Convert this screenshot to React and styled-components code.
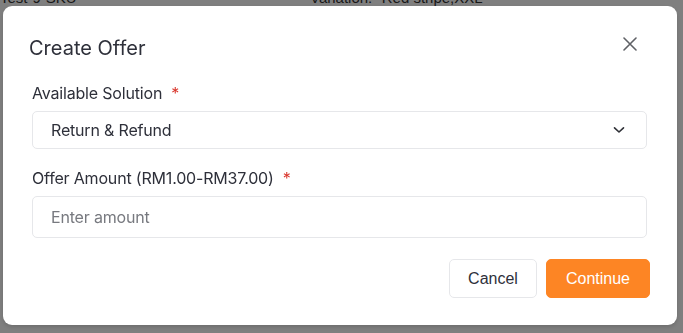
import styled, { createGlobalStyle } from "styled-components";

const GlobalStyle = createGlobalStyle`
    html, body {
        margin: 0;
        padding: 0;
        background: #ffffff;
        font-family: Inter, "Liberation Sans", Arial, sans-serif;
    }
    * {
        box-sizing: border-box;
    }
`

const ChevronDown = () => (
    <svg width="12" height="8" viewBox="0 0 12 8" fill="none">
        <path d="M1.5 1.8 L6 6 L10.5 1.8" stroke="#2f3137" strokeWidth="1.6" strokeLinecap="round" strokeLinejoin="round" />
    </svg>
)

const CloseIcon = () => (
    <svg width="14" height="14" viewBox="0 0 14 14" fill="none">
        <path d="M1 1 L13 13 M13 1 L1 13" stroke="#5f6166" strokeWidth="1.6" strokeLinecap="round" />
    </svg>
)

const App = () => {

    return (
        <>
            <GlobalStyle />
            <Page>
                <PageRow>
                    <PageCell>Test-9-SKU</PageCell>
                    <PageCell $wide>Variation: "Red stripe,XXL"</PageCell>
                </PageRow>
            </Page>
            <Overlay>
                <Dialog>
                    <Header>
                        <Title>Create Offer</Title>
                        <CloseButton aria-label="Close">
                            <CloseIcon />
                        </CloseButton>
                    </Header>
                    <Field>
                        <Label>Available Solution<Required>*</Required></Label>
                        <SelectBox>
                            <span>Return &amp; Refund</span>
                            <ChevronDown />
                        </SelectBox>
                    </Field>
                    <Field $gap>
                        <Label>Offer Amount (RM1.00-RM37.00)<Required>*</Required></Label>
                        <Input placeholder="Enter amount" />
                    </Field>
                    <Footer>
                        <Button $width={88}>Cancel</Button>
                        <Button $width={104} $primary>Continue</Button>
                    </Footer>
                </Dialog>
            </Overlay>
        </>
    )
};

const Page = styled.div`
    height: 333px;
    background: #ffffff;
    overflow: hidden;
`

const PageRow = styled.div`
    display: flex;
    margin-top: -13px;
    height: 20px;
    align-items: center;
`

const PageCell = styled.div`
    font-family: "Liberation Sans", Arial, sans-serif;
    font-size: 15px;
    color: #333333;
    width: ${(p) => (p.$wide ? "auto" : "310px")};
`

const Overlay = styled.div`
    position: fixed;
    inset: 0;
    background: rgba(0, 0, 0, 0.5);
    padding: 6px 6px 0 3px;
`

const Dialog = styled.div`
    width: 674px;
    height: 319px;
    background: #ffffff;
    border-radius: 9px;
    box-shadow: 0 2px 4px rgba(0, 0, 0, 0.15);
    padding: 29px 30px 28px 26px;
    display: flex;
    flex-direction: column;
`

const Header = styled.div`
    display: flex;
    align-items: center;
    justify-content: space-between;
    height: 26px;
    margin-bottom: 22px;
`

const Title = styled.h2`
    margin: 0;
    font-size: 20px;
    font-weight: 400;
    color: #2e303a;
    line-height: 26px;
`

const CloseButton = styled.button`
    border: none;
    background: transparent;
    padding: 0;
    width: 20px;
    height: 20px;
    display: flex;
    align-items: center;
    justify-content: center;
    margin-right: 7px;
    margin-top: -9px;
    cursor: pointer;
`

const Field = styled.div`
    display: flex;
    flex-direction: column;
    gap: 8px;
    margin-top: ${(p) => (p.$gap ? "19px" : "0")};
`

const Label = styled.label`
    font-size: 16px;
    line-height: 20px;
    color: #2e303a;
    padding-left: 3px;
    letter-spacing: -0.18px;
`

const Required = styled.span`
    color: #d9352b;
    margin-left: 9px;
`

const SelectBox = styled.div`
    height: 38px;
    margin-left: 3px;
    border: 1px solid #e6e7ea;
    border-radius: 5px;
    display: flex;
    align-items: center;
    justify-content: space-between;
    padding: 0 21px 0 18px;
    font-size: 16px;
    color: #2e303a;
    letter-spacing: -0.18px;
`

const Input = styled.input`
    height: 42px;
    margin-left: 3px;
    border: 1px solid #e6e7ea;
    border-radius: 5px;
    padding: 0 18px;
    font-family: Inter, "Liberation Sans", Arial, sans-serif;
    font-size: 16px;
    color: #2e303a;
    outline: none;
    letter-spacing: -0.18px;

    &::placeholder {
        color: #77797f;
    }
`

const Footer = styled.div`
    display: flex;
    justify-content: flex-end;
    gap: 9px;
    margin-top: 21px;
    margin-right: -3px;
`

const Button = styled.button`
    width: ${(p) => p.$width}px;
    height: 39px;
    padding: 0;
    border-radius: 5px;
    font-family: "Liberation Sans", Arial, sans-serif;
    font-size: 16px;
    cursor: pointer;
    border: 1px solid ${(p) => (p.$primary ? "#fd8524" : "#e6e7ea")};
    background: ${(p) => (p.$primary ? "#fd8524" : "#ffffff")};
    color: ${(p) => (p.$primary ? "#ffffff" : "#2e303a")};
`

export default App;
